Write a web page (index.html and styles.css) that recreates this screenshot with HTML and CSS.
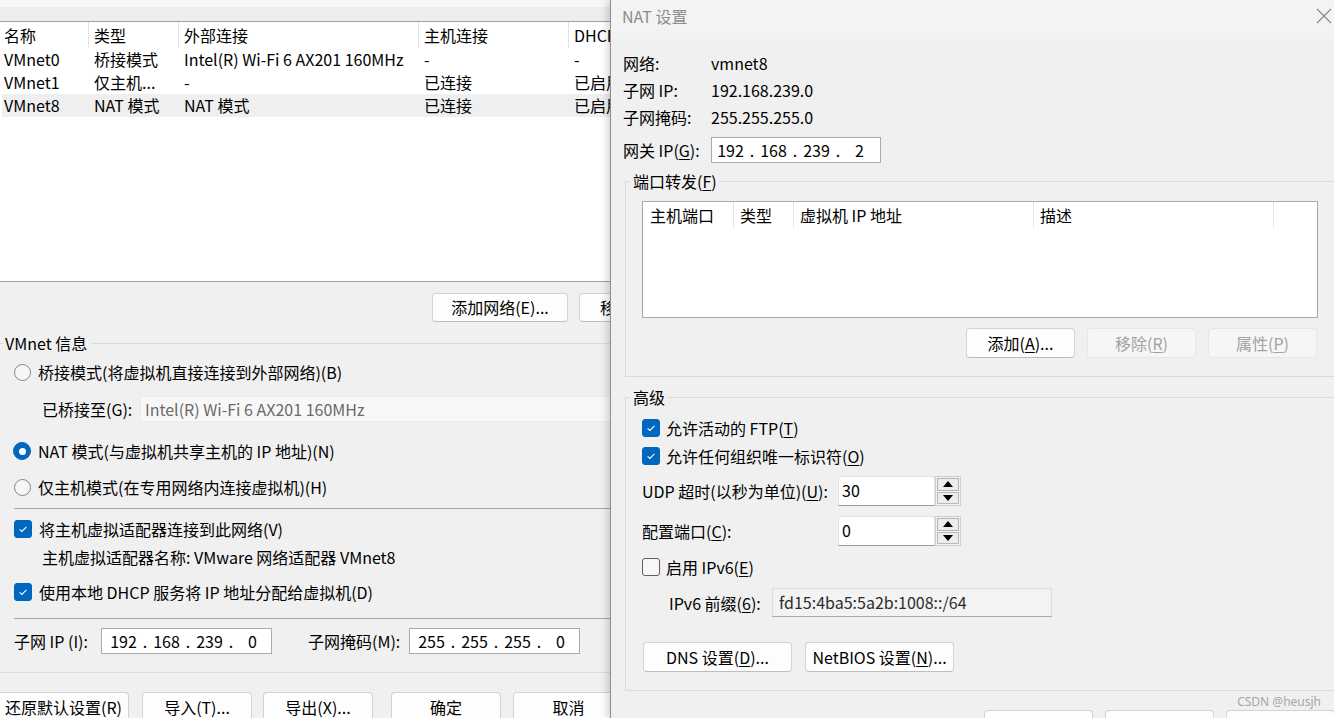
FILE: index.html
```html
<!DOCTYPE html>
<html lang="zh-CN">
<head>
<meta charset="utf-8">
<title>虚拟网络编辑器 - NAT 设置</title>
<link rel="stylesheet" href="styles.css">
</head>
<body>
<div class="screen">
  <div class="main">
    <div class="topbar"></div>
    <div class="table">
      <div class="trow thead">
        <div class="c c1">名称</div><div class="c c2">类型</div><div class="c c3">外部连接</div><div class="c c4">主机连接</div><div class="c c5">DHCP</div>
      </div>
      <div class="trow">
        <div class="c c1">VMnet0</div><div class="c c2">桥接模式</div><div class="c c3">Intel(R) Wi-Fi 6 AX201 160MHz</div><div class="c c4">-</div><div class="c c5">-</div>
      </div>
      <div class="trow">
        <div class="c c1">VMnet1</div><div class="c c2">仅主机...</div><div class="c c3">-</div><div class="c c4">已连接</div><div class="c c5">已启用</div>
      </div>
      <div class="trow sel">
        <div class="c c1">VMnet8</div><div class="c c2">NAT 模式</div><div class="c c3">NAT 模式</div><div class="c c4">已连接</div><div class="c c5">已启用</div>
      </div>
    </div>
    <div class="panel">
      <div class="btnrow1">
        <button class="btn b-addnet">添加网络(E)...</button>
        <button class="btn b-rmnet">移除网络(O)</button>
      </div>
      <div class="glabel"><span>VMnet 信息</span></div>
      <div class="opt h36"><span class="radio"></span><span>桥接模式(将虚拟机直接连接到外部网络)(B)</span></div>
      <div class="bridge">
        <span class="blabel">已桥接至(G):</span>
        <div class="dinput">Intel(R) Wi-Fi 6 AX201 160MHz</div>
      </div>
      <div class="opt h46"><span class="radio on"></span><span>NAT 模式(与虚拟机共享主机的 IP 地址)(N)</span></div>
      <div class="opt h26"><span class="radio"></span><span>仅主机模式(在专用网络内连接虚拟机)(H)</span></div>
      <div class="sep sep1"></div>
      <div class="opt h26"><span class="cb on"><svg viewBox="0 0 18 18" width="18" height="18"><path d="M5.6 9.3 L7.9 11.5 L12.4 6.8" fill="none" stroke="#fff" stroke-width="1.1"/></svg></span><span>将主机虚拟适配器连接到此网络(V)</span></div>
      <div class="adapter">主机虚拟适配器名称: VMware 网络适配器 VMnet8</div>
      <div class="opt h40"><span class="cb on"><svg viewBox="0 0 18 18" width="18" height="18"><path d="M5.6 9.3 L7.9 11.5 L12.4 6.8" fill="none" stroke="#fff" stroke-width="1.1"/></svg></span><span>使用本地 DHCP 服务将 IP 地址分配给虚拟机(D)</span></div>
      <div class="sep sep2"></div>
      <div class="subnet">
        <span class="sl1">子网 IP (I):</span>
        <div class="ip ipw"><span class="oct">192</span><span class="dot">.</span><span class="oct">168</span><span class="dot">.</span><span class="oct">239</span><span class="dot">.</span><span class="oct">0</span></div>
        <span class="sl2">子网掩码(M):</span>
        <div class="ip ipw"><span class="oct">255</span><span class="dot">.</span><span class="oct">255</span><span class="dot">.</span><span class="oct">255</span><span class="dot">.</span><span class="oct">0</span></div>
      </div>
      <div class="sep sep3"></div>
      <div class="btnrow2">
        <button class="btn b-restore">还原默认设置(R)</button>
        <button class="btn b-import">导入(T)...</button>
        <button class="btn b-export">导出(X)...</button>
        <button class="btn b-ok">确定</button>
        <button class="btn b-cancel">取消</button>
      </div>
    </div>
  </div>

  <div class="dialog">
    <div class="titlebar">
      <span class="title">NAT 设置</span>
      <svg class="close" viewBox="0 0 16 16" width="16" height="16"><path d="M1 1 L15 15 M15 1 L1 15" stroke="#8a8a8a" stroke-width="1.2" fill="none"/></svg>
    </div>
    <div class="dbody">
      <div class="irow r1"><span class="ilabel">网络:</span><span>vmnet8</span></div>
      <div class="irow"><span class="ilabel">子网 IP:</span><span>192.168.239.0</span></div>
      <div class="irow"><span class="ilabel">子网掩码:</span><span>255.255.255.0</span></div>
      <div class="grow">
        <span class="ilabel">网关 IP(<u>G</u>):</span>
        <div class="ip ipw"><span class="oct">192</span><span class="dot">.</span><span class="oct">168</span><span class="dot">.</span><span class="oct">239</span><span class="dot">.</span><span class="oct">2</span></div>
      </div>

      <fieldset class="group gport">
        <legend>端口转发(<u>F</u>)</legend>
        <div class="list">
          <div class="lhead">
            <div class="lc l1">主机端口</div><div class="lc l2">类型</div><div class="lc l3">虚拟机 IP 地址</div><div class="lc l4">描述</div><div class="lc l5"></div>
          </div>
        </div>
        <div class="pbtns">
          <button class="btn dbtn">添加(<u>A</u>)...</button>
          <button class="btn dbtn dis">移除(<u>R</u>)</button>
          <button class="btn dbtn dis">属性(<u>P</u>)</button>
        </div>
      </fieldset>

      <fieldset class="group gadv">
        <legend>高级</legend>
        <div class="crow c-ftp"><span class="cb on"><svg viewBox="0 0 18 18" width="18" height="18"><path d="M5.6 9.3 L7.9 11.5 L12.4 6.8" fill="none" stroke="#fff" stroke-width="1.1"/></svg></span><span>允许活动的 FTP(<u>T</u>)</span></div>
        <div class="crow"><span class="cb on"><svg viewBox="0 0 18 18" width="18" height="18"><path d="M5.6 9.3 L7.9 11.5 L12.4 6.8" fill="none" stroke="#fff" stroke-width="1.1"/></svg></span><span>允许任何组织唯一标识符(<u>O</u>)</span></div>
        <div class="srow s-udp">
          <span class="slabel">UDP 超时(以秒为单位)(<u>U</u>):</span>
          <div class="sinput">30</div>
          <div class="spin">
            <span class="sb"><svg viewBox="0 0 10 6" width="10" height="6"><polygon points="0,6 5,0 10,6" fill="#000"/></svg></span>
            <span class="sb"><svg viewBox="0 0 10 6" width="10" height="6"><polygon points="0,0 10,0 5,6" fill="#000"/></svg></span>
          </div>
        </div>
        <div class="srow s-port">
          <span class="slabel">配置端口(<u>C</u>):</span>
          <div class="sinput">0</div>
          <div class="spin">
            <span class="sb"><svg viewBox="0 0 10 6" width="10" height="6"><polygon points="0,6 5,0 10,6" fill="#000"/></svg></span>
            <span class="sb"><svg viewBox="0 0 10 6" width="10" height="6"><polygon points="0,0 10,0 5,6" fill="#000"/></svg></span>
          </div>
        </div>
        <div class="crow c-v6"><span class="cb"></span><span>启用 IPv6(<u>E</u>)</span></div>
        <div class="prow">
          <span class="plabel">IPv6 前缀(<u>6</u>):</span>
          <div class="pinput">fd15:4ba5:5a2b:1008::/64</div>
        </div>
        <div class="nbtns">
          <button class="btn nbtn">DNS 设置(<u>D</u>)...</button>
          <button class="btn nbtn">NetBIOS 设置(<u>N</u>)...</button>
        </div>
      </fieldset>

      <div class="fbtns">
        <button class="btn dbtn">确定</button>
        <button class="btn dbtn">取消</button>
        <button class="btn dbtn">帮助</button>
      </div>
    </div>
    <div class="watermark">CSDN @heusjh</div>
  </div>
</div>
</body>
</html>
```
FILE: styles.css
```css
* { box-sizing: border-box; }
html, body { margin: 0; padding: 0; }
body {
  width: 1334px; height: 718px; overflow: hidden;
  font-family: "Noto Sans CJK SC", "Noto Sans", sans-serif;
  font-size: 16px; color: #000; background: #f0f0f0;
}
u { text-decoration: underline; text-underline-offset: 2px; text-decoration-thickness: 1px; }
.screen { display: flex; width: 1334px; height: 718px; }

/* ---------- left main window ---------- */
.main {
  width: 610px; flex: none; overflow: hidden; background: #f0f0f0;
  display: flex; flex-direction: column;
}
.topbar {
  height: 22px; flex: none;
  background: linear-gradient(#f8f8f8 0, #f8f8f8 7px, #ededed 7px);
  border-bottom: 1px solid #a0a0a0;
}
.table {
  height: 260px; flex: none; width: 610px; overflow: hidden;
  background: #fff; border-bottom: 1px solid #a0a0a0;
}
.trow { display: flex; height: 23px; line-height: 23px; white-space: nowrap; }
.thead { height: 26px; line-height: 26px; }
.c { flex: none; padding-left: 6px; overflow: hidden; }
.c1 { width: 88px; padding-left: 4px; }
.c2 { width: 90px; }
.c3 { width: 240px; }
.c4 { width: 150px; }
.c5 { width: 42px; }
.thead .c + .c { border-left: 1px solid #e3e3e3; padding-left: 5px; }
.trow.sel { background: #efefef; margin-left: 2px; }
.trow.sel .c1 { width: 86px; padding-left: 2px; }

.panel { display: flex; flex-direction: column; width: 610px; flex: none; overflow: hidden; }

.btn {
  font: inherit; color: #000; padding: 0; margin: 0;
  height: 30px; line-height: 28px; text-align: center; white-space: nowrap;
  background: #fdfdfd; border: 1px solid #d3d3d3; border-bottom-color: #bdbdbd;
  border-radius: 4px; flex: none; overflow: hidden;
}
.btnrow1 { height: 50px; padding: 11px 0 0 432px; display: flex; gap: 11px; }
.btnrow1 .btn { height: 29px; line-height: 27px; }
.b-addnet { width: 136px; }
.b-rmnet { width: 136px; text-align: left; padding-left: 20px; }

.glabel { height: 22px; display: flex; align-items: center; line-height: 20px; }
.glabel::before { content: ""; width: 4px; border-top: 1px solid #dadada; margin-right: 1px; }
.glabel::after { content: ""; flex: 1; border-top: 1px solid #dadada; margin-left: 4px; }

.opt { display: flex; align-items: center; padding-left: 14px; gap: 7px; white-space: nowrap; }
.h26 { height: 26px; } .h36 { height: 36px; } .h40 { height: 40px; } .h46 { height: 46px; }

.radio {
  width: 17px; height: 17px; border-radius: 50%; flex: none;
  border: 1px solid #858585; background: #f6f6f6;
}
.radio.on {
  background: #0067c0; border-color: #0067c0; width: 18px; height: 18px;
  display: flex; align-items: center; justify-content: center; margin-left: -1px;
}
.radio.on::after { content: ""; width: 7px; height: 7px; border-radius: 50%; background: #fff; }

.cb {
  width: 18px; height: 18px; border-radius: 3px; flex: none;
  border: 1px solid #6f6f6f; background: #f8f8f8; display: block;
}
.cb.on { background: #0067c0; border-color: #0067c0; }
.cb svg { display: block; margin: -1px; }

.bridge { height: 38px; display: flex; align-items: center; padding-left: 42px; white-space: nowrap; }
.blabel { width: 98px; flex: none; }
.dinput {
  height: 26px; flex: 1; line-height: 24px; padding-left: 4px;
  background: #f8f8f8; border: 1px solid #ececec; border-right: none; color: #6a6a6a;
}

.sep { margin-left: 14px; border-top: 1px solid #a6a6a6; flex: none; }
.sep1 { margin-top: 8px; margin-bottom: 7px; }
.sep2 { margin-top: 6px; margin-bottom: 9px; }
.sep3 { margin-left: 0; margin-top: 18px; margin-bottom: 19px; border-top-color: #dcdcdc; }

.adapter { height: 30px; line-height: 30px; padding-left: 42px; white-space: nowrap; }

.subnet { height: 26px; display: flex; align-items: center; padding-left: 14px; white-space: nowrap; }
.sl1 { width: 87px; flex: none; }
.sl2 { width: 101px; flex: none; margin-left: 36px; }

.ip {
  height: 26px; display: flex; align-items: center; flex: none;
  background: #fff; border: 1px solid #ababab; padding-left: 6px; line-height: 24px;
}
.ipw { width: 171px; }
.oct { width: 31px; text-align: center; flex: none; }
.dot { width: 12px; text-align: center; flex: none; }

.btnrow2 { height: 30px; display: flex; }
.btnrow2 .btn { width: 110px; }
.btnrow2 .b-restore { width: 131px; margin-left: -2px; }
.b-import { margin-left: 13px; }
.b-export { margin-left: 11px; }
.b-ok { margin-left: 18px; }
.btnrow2 .b-cancel { margin-left: 12px; width: 97px; padding-left: 13px; border-right: none; border-radius: 4px 0 0 4px; }

/* ---------- NAT dialog ---------- */
.dialog {
  width: 724px; flex: none; position: relative; overflow: hidden;
  background: #f0f0f0; border-left: 1px solid #8e8e8e;
  box-shadow: -3px 0 7px rgba(0, 0, 0, 0.16);
  display: flex; flex-direction: column;
}
.titlebar {
  height: 39px; flex: none; background: #f3f3f3;
  display: flex; justify-content: space-between; align-items: flex-start;
  padding: 6px 0 0 11px;
}
.title { color: #8c8c8c; line-height: 20px; }
.close { display: block; margin: 2px 2px 0 0; }

.dbody { padding-left: 12px; display: flex; flex-direction: column; }
.irow { height: 27px; display: flex; align-items: center; }
.irow.r1 { margin-top: 10px; }
.ilabel { width: 88px; flex: none; white-space: nowrap; }
.grow { height: 26px; display: flex; align-items: center; margin-top: 7px; }
.grow .ip { height: 26px; width: 170px; padding-left: 3px; }

.group {
  margin: 0 -20px 0 2px; padding: 0; min-width: 0;
  border: 1px solid #dadada;
}
.group legend {
  margin-left: 5px; padding: 0 2px; line-height: 20px; height: 20px;
}
.gport { margin-top: 8px; padding-bottom: 18px; }
.gadv { margin-top: 10px; padding-bottom: 18px; }

.list {
  margin: 10px 0 0 16px; width: 676px; height: 117px;
  background: #fff; border: 1px solid #a9a9a9;
}
.lhead { display: flex; height: 26px; line-height: 26px; white-space: nowrap; }
.lc { flex: none; padding-left: 7px; }
.lc + .lc { border-left: 1px solid #e5e5e5; padding-left: 6px; }
.l1 { width: 90px; } .l2 { width: 60px; } .l3 { width: 240px; } .l4 { width: 240px; } .l5 { width: 44px; }

.pbtns { margin: 10px 0 0 16px; width: 675px; display: flex; justify-content: flex-end; gap: 12px; }
.dbtn { width: 109px; }
.btn.dis { background: #f6f6f6; border-color: #e6e6e6; color: #a2a2a2; }

.crow { height: 28px; display: flex; align-items: center; gap: 6px; margin-left: 16px; white-space: nowrap; }
.c-ftp { margin-top: 7px; }
.c-v6 { height: 26px; margin-top: 8px; }
.c-v6 .cb { background: #f7f7f7; border-color: #5f5f5f; }

.srow { height: 30px; display: flex; align-items: center; margin-left: 16px; white-space: nowrap; }
.s-udp { margin-top: 6px; }
.s-port { margin-top: 10px; }
.slabel { width: 196px; flex: none; }
.sinput {
  width: 97px; height: 30px; flex: none; background: #fff; padding-left: 3px; line-height: 26px;
  border: 1px solid #e3e3e3; border-bottom-color: #9a9a9a;
}
.spin {
  width: 26px; height: 30px; flex: none; display: flex; flex-direction: column; gap: 1px;
  padding: 1px; border: 1px solid #cfcfcf; background: #f0f0f0;
}
.sb {
  flex: 1; border: 1px solid #b9b9b9; background: #ececec;
  display: flex; align-items: center; justify-content: center;
}
.sb svg { display: block; }

.prow { height: 29px; display: flex; align-items: center; margin-top: 8px; margin-left: 43px; white-space: nowrap; }
.plabel { width: 103px; flex: none; }
.pinput {
  width: 280px; height: 29px; flex: none; padding-left: 6px; line-height: 26px; color: #2c2c2c;
  background: #f3f3f3; border: 1px solid #dcdcdc; border-bottom-color: #a8a8a8;
}

.nbtns { margin: 25px 0 0 17px; display: flex; gap: 13px; }
.nbtn { width: 149px; }

.fbtns { margin-top: 19px; display: flex; justify-content: flex-end; gap: 12px; margin-right: -1px; }

.watermark {
  position: absolute; right: 13px; top: 694px;
  font-size: 12px; line-height: 16px; color: #a6a6a6; font-family: "Noto Sans", "Noto Sans CJK SC", sans-serif;
}
```
